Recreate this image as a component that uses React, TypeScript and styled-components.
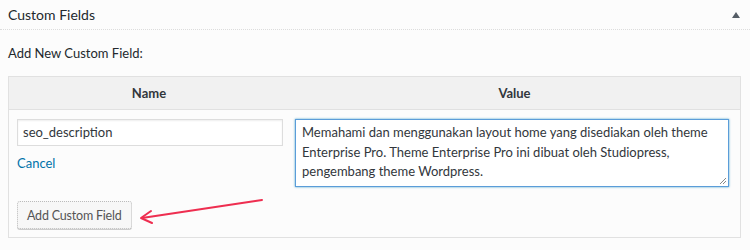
import React from 'react';
import styled, { createGlobalStyle } from 'styled-components';

const GlobalStyle = createGlobalStyle`
  html, body {
    margin: 0;
    padding: 0;
    background: #fcfcfc;
    font-family: Lato, "Open Sans", sans-serif;
    color: #23282d;
  }
`;

const Box = styled.div`
  position: relative;
  width: 750px;
  height: 250px;
  overflow: hidden;
`;

const BoxHeader = styled.div`
  display: flex;
  align-items: center;
  justify-content: space-between;
  height: 29px;
  padding: 0 8px 0 8px;
  border-bottom: 1px dotted #dcdcdc;
  font-size: 14px;
  color: #23282d;
`;

const Toggle = styled.span`
  width: 0;
  height: 0;
  margin-right: 2px;
  border-left: 4px solid transparent;
  border-right: 4px solid transparent;
  border-bottom: 6px solid #555d66;
`;

const Inside = styled.div`
  padding: 14px 9px 0 8px;
`;

const Label = styled.p`
  margin: 0 0 14px;
  font-size: 13px;
  line-height: 18px;
`;

const Table = styled.div`
  border: 1px solid #e1e1e1;
  display: grid;
  grid-template-columns: 280px 1fr;
`;

const HeadCell = styled.div`
  height: 32px;
  background: #f1f1f1;
  border-bottom: 1px solid #e1e1e1;
  display: flex;
  align-items: center;
  justify-content: center;
  font-size: 13px;
  font-weight: 700;
  color: #32373c;
`;

const Cell = styled.div<{ $right?: boolean }>`
  padding: ${p => (p.$right ? '9px 11px 8px 6px' : '9px 6px 8px 8px')};
  display: flex;
  flex-direction: column;
  align-items: flex-start;
`;

const TextInput = styled.div`
  box-sizing: border-box;
  width: 100%;
  height: 27px;
  padding: 0 5px;
  border: 1px solid #ddd;
  background: #fff;
  box-shadow: inset 0 1px 2px rgba(0, 0, 0, 0.07);
  font-size: 13px;
  line-height: 25px;
  color: #32373c;
`;

const Cancel = styled.a`
  margin-top: 8px;
  font-size: 13px;
  line-height: 18px;
  color: #0073aa;
  text-decoration: none;
`;

const Button = styled.button`
  margin-top: 29px;
  height: 28px;
  padding: 0 9px;
  border: 1px dotted #bbb;
  border-radius: 3px;
  background: #f7f7f7;
  box-shadow: 0 1px 0 #ccc;
  font-family: inherit;
  font-size: 12.5px;
  letter-spacing: -0.2px;
  color: #555;
`;

const TextArea = styled.div`
  position: relative;
  box-sizing: border-box;
  width: 100%;
  height: 68px;
  padding: 3px 6px;
  border: 1px solid #5b9dd9;
  background: #fff;
  box-shadow: 0 0 2px rgba(30, 140, 190, 0.8);
  font-size: 13px;
  line-height: 19.5px;
  color: #32373c;
`;

const Grip = styled.svg`
  position: absolute;
  right: 1px;
  bottom: 1px;
`;

const Arrow = styled.svg`
  position: absolute;
  left: 136px;
  top: 194px;
`;

export default function App() {
  return (
    <>
      <GlobalStyle />
      <Box>
        <BoxHeader>
          <span>Custom Fields</span>
          <Toggle />
        </BoxHeader>
        <Inside>
          <Label>Add New Custom Field:</Label>
          <Table>
            <HeadCell>Name</HeadCell>
            <HeadCell>Value</HeadCell>
            <Cell>
              <TextInput>seo_description</TextInput>
              <Cancel href="#">Cancel</Cancel>
              <Button>Add Custom Field</Button>
            </Cell>
            <Cell $right>
              <TextArea>
                Memahami dan menggunakan layout home yang disediakan oleh theme Enterprise Pro. Theme
                Enterprise Pro ini dibuat oleh Studiopress, pengembang theme Wordpress.
                <Grip width="8" height="8" viewBox="0 0 8 8">
                  <path d="M7 1 L1 7 M7 4 L4 7" stroke="#888" strokeWidth="1" />
                </Grip>
              </TextArea>
            </Cell>
          </Table>
        </Inside>
        <Arrow width="132" height="32" viewBox="0 0 132 32">
          <path d="M126 6 L6 24" stroke="#ee2e50" strokeWidth="2" fill="none" strokeLinecap="round" />
          <path d="M15 17 L5 24 L16 29" stroke="#ee2e50" strokeWidth="2" fill="none" strokeLinecap="round" strokeLinejoin="round" />
        </Arrow>
      </Box>
    </>
  );
}
